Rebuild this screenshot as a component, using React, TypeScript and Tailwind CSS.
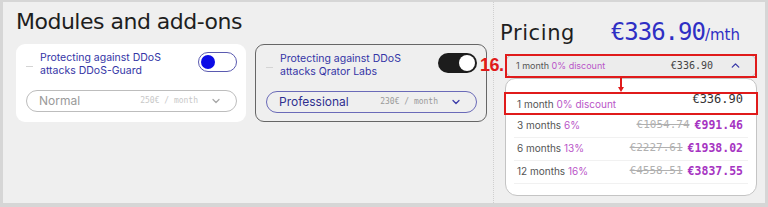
import { ChevronDown, ChevronUp } from 'lucide-react';

const mono = "font-['DejaVu_Sans_Mono',monospace]";
const grot = "font-['DejaVu_Sans',sans-serif]";
const sans = "font-['Inter','Liberation_Sans',sans-serif]";

function Toggle({ on }: { on: boolean }) {
  // on = dark track with white knob right, off = white track with blue knob left
  return on ? (
    <div className="flex h-[20px] w-[39px] items-center justify-end rounded-full bg-[#1c1c1c] px-[2px]">
      <div className="h-[16px] w-[16px] rounded-full bg-white" />
    </div>
  ) : (
    <div className="flex h-[20px] w-[39px] items-center rounded-full border border-[#5a5ab0] bg-white px-[2px]">
      <div className="h-[14px] w-[14px] rounded-full bg-[#0c0ce6]" />
    </div>
  );
}

function ModuleCard({ title, sub, tier, price, active }: any) {
  return (
    <div
      className={
        'flex h-[78px] flex-col rounded-[9px] pl-[10px] pr-[9px] pt-[8px] ' +
        (active ? 'w-[232px] border border-[#666]' : 'w-[230px] bg-white')
      }
    >
      <div className="flex items-start justify-between">
        <div className="flex items-center gap-[7px]">
          <span className="mt-[4px] h-[1px] w-[7px] bg-[#d4d4d4]" />
          <p className={`${sans} text-[10.5px] leading-[12.5px] text-[#3434a6]`}>
            {title}
            <br />
            {sub}
          </p>
        </div>
        <Toggle on={!!active} />
      </div>
      <div
        className={
          'mt-[13px] flex h-[22px] items-center rounded-full border pl-[12px] pr-[14px] ' +
          (active ? 'border-[#6a6ab8]' : 'border-[#bdbdbd]')
        }
      >
        <span className={`${sans} flex-1 text-[12px] ${active ? 'text-[#2f2f8f]' : 'text-[#9a9a9a]'}`}>
          {tier}
        </span>
        <span className={`${mono} mr-[12px] text-[8px] ${active ? 'text-[#9a9a9a]' : 'text-[#c8c8c8]'}`}>
          {price}
        </span>
        <ChevronDown
          size={12}
          strokeWidth={2.5}
          className={active ? 'text-[#3a3aa8]' : 'text-[#a8a8a8]'}
        />
      </div>
    </div>
  );
}

const rows = [
  { m: '3 months', d: '6%', old: '€1054.74', now: '€991.46' },
  { m: '6 months', d: '13%', old: '€2227.61', now: '€1938.02' },
  { m: '12 months', d: '16%', old: '€4558.51', now: '€3837.55' },
];

export default function App() {
  return (
    <div className="h-[207px] w-[768px] overflow-hidden bg-[#d6d6d6] pb-[4px] pl-[3px] pr-[3px] pt-[2px]">
      <div className="flex h-full bg-[#efefef]">
        {/* left: modules */}
        <div className="w-[490px] pl-[13px] pt-[6px]">
          <h1 className={`${grot} text-[22px] leading-[28px] tracking-[-0.5px] text-[#1e1e1e]`}>
            Modules and add-ons
          </h1>
          <div className="mt-[8px] flex gap-[9px]">
            <ModuleCard
              title="Protecting against DDoS"
              sub="attacks DDoS-Guard"
              tier="Normal"
              price="250€ / month"
            />
            <ModuleCard
              active
              title="Protecting against DDoS"
              sub="attacks Qrator Labs"
              tier="Professional"
              price="230€ / month"
            />
          </div>
        </div>

        <div className="w-0 border-l border-dotted border-[#cfcfcf]" />

        {/* right: pricing */}
        <div className="relative flex-1 pl-[6px] pt-[15px]">
          <div className="flex items-baseline pr-[25px]">
            <span className={`${grot} text-[21px] tracking-[0.6px] text-[#1e1e1e]`}>Pricing</span>
            <span className={`${mono} ml-auto text-[24px] leading-[30px] tracking-[-1px] text-[#2f2fc4]`}>
              €336.90
            </span>
            <span className={`${grot} text-[15px] text-[#2f2fc4]`}>/mth</span>
          </div>

          <div className="ml-[5px] mt-[4px] w-[252px]">
            <div className="relative flex h-[24px] items-center rounded-[9px] border border-[#c9c9c9] bg-[#ececec] pl-[10px] pr-[14px]">
              <span className={`${sans} flex-1 text-[9px] text-[#555]`}>
                1 month <span className="text-[#b955c8]">0% discount</span>
              </span>
              <span className={`${mono} mr-[16px] text-[10px] text-[#444]`}>€336.90</span>
              <ChevronUp size={13} strokeWidth={2.5} className="text-[#3a3aa8]" />
              <div className="absolute -inset-[1px] border-2 border-[#e01b1b]" />
              <span className="absolute -left-[26px] top-[1px] font-['Liberation_Sans',sans-serif] text-[18px] font-bold leading-[18px] tracking-[-0.5px] text-[#e01b1b]">
                16.
              </span>
            </div>

            <div className="relative rounded-b-[12px] rounded-t-[10px] border border-[#c4c4c4] bg-white pb-[11px] pt-[13px]">
              {/* annotation arrow */}
              <div className="absolute left-[112px] top-[-1px] flex flex-col items-center">
                <div className="h-[9px] w-[2px] bg-[#e01b1b]" />
                <div className="h-0 w-0 border-x-[3px] border-t-[5px] border-x-transparent border-t-[#e01b1b]" />
              </div>
              <div className="relative flex h-[23px] items-start justify-between pl-[11px] pr-[13px]">
                <span className={`${sans} self-end pb-[3px] text-[10px] text-[#555]`}>
                  1 month <span className="text-[#b955c8]">0% discount</span>
                </span>
                <span className={`${mono} text-[12px] leading-[14px] text-[#333]`}>€336.90</span>
                <div className="absolute -left-[2px] -right-[2px] inset-y-0 border-2 border-[#e01b1b]" />
              </div>
              {rows.map((r) => (
                <div
                  key={r.m}
                  className="mx-[8px] flex h-[23px] items-center border-b border-[#f1f1f1] pl-[3px] pr-[5px]"
                >
                  <span className={`${sans} flex-1 text-[10px] text-[#555]`}>
                    {r.m} <span className="text-[#b955c8]">{r.d}</span>
                  </span>
                  <span className={`${mono} mr-[5px] text-[11px] text-[#b0b0b0] line-through`}>{r.old}</span>
                  <span className={`${mono} text-[11.5px] font-bold text-[#a634c2]`}>{r.now}</span>
                </div>
              ))}
            </div>
          </div>
        </div>
      </div>
    </div>
  );
}
